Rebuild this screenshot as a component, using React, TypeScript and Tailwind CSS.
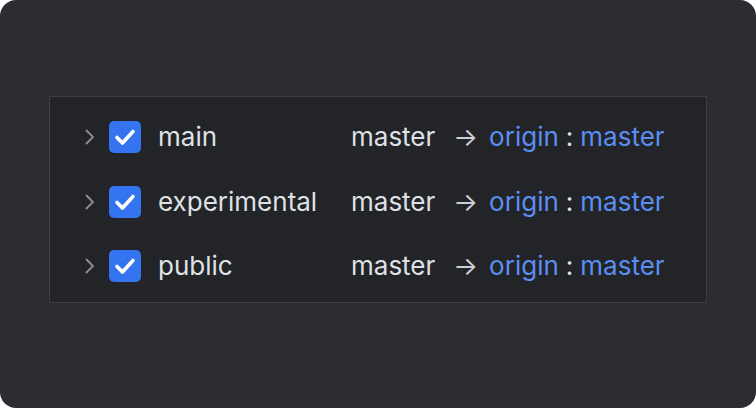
import { Fragment } from 'react'

const ROWS = ['main', 'experimental', 'public']

export default function App() {
  return (
    <div className="w-[756px] h-[408px] bg-white">
      <div
        className="w-full h-full rounded-[16px] bg-[#2b2d30] pt-[96px] pl-[49px]"
        style={{ fontFamily: 'Inter, "Noto Sans", sans-serif' }}
      >
        <div className="w-[658px] h-[207px] border border-[#3c3d41] bg-[#232428] pt-[8px]">
          {ROWS.map((name) => (
            <div key={name} className="flex items-center h-[64.5px] text-[26px] text-[#dfe1e5]">
              <svg width="12" height="18" viewBox="0 0 12 18" className="ml-[34px] text-[#8c8f94]">
                <path d="M2 2l7 7-7 7" fill="none" stroke="currentColor" strokeWidth="1.8" />
              </svg>
              <div className="ml-[13px] w-[32px] h-[32px] rounded-[5px] bg-[#3574f0] flex items-center justify-center">
                <svg width="26" height="26" viewBox="0 0 26 26">
                  <path d="M5 13.5l5.5 5.5 10.5-11.5" fill="none" stroke="#fff" strokeWidth="3.6" strokeLinecap="round" strokeLinejoin="round" />
                </svg>
              </div>
              <span className="ml-[17px] w-[193px] leading-none">{name}</span>
              <Fragment>
                <span className="leading-none">master</span>
                <span className="ml-[18px] text-[#ced0d6] leading-none">→</span>
                <span className="ml-[11px] text-[#5a8ef2] leading-none">origin</span>
                <span className="mx-[7px] leading-none">:</span>
                <span className="text-[#5a8ef2] leading-none">master</span>
              </Fragment>
            </div>
          ))}
        </div>
      </div>
    </div>
  )
}
